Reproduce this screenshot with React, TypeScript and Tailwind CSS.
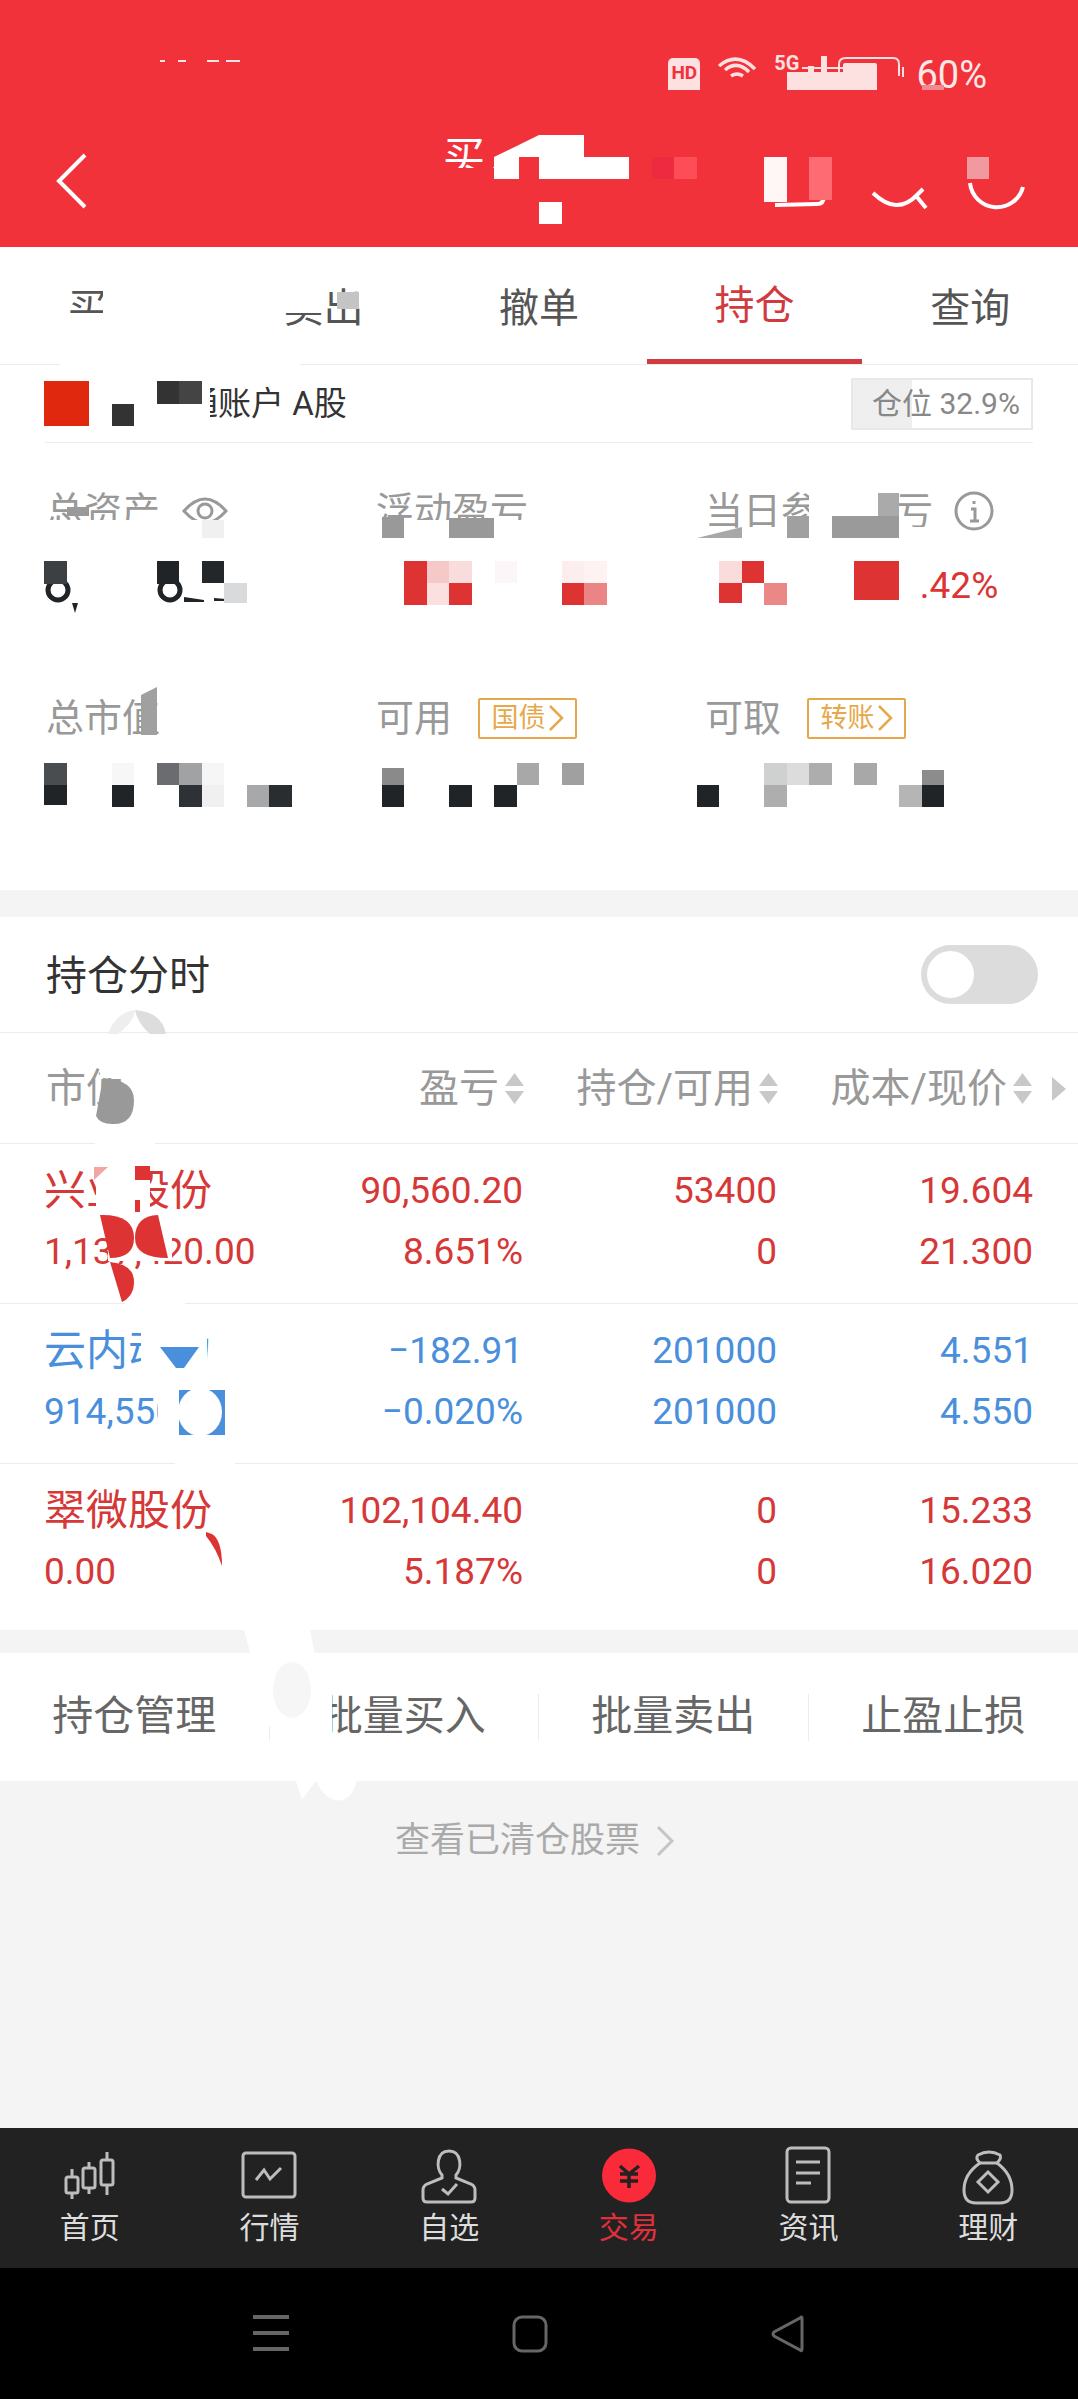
import type { ReactNode } from "react"

const font = "font-['Roboto','Noto_Sans_CJK_SC',sans-serif]"

const RED = "#dd3333"
const DARK = "#212427"

// the screenshot was scribbled over: mosaic squares and white blots, [x, y, w, h, colour]
const patches: [number, number, number, number, string][] = [
  // time, title
  [158, 40, 90, 20, "#f1323b"],
  [160, 60, 5, 2, "#ffe5e5"],
  [178, 60, 8, 2, "#ffe5e5"],
  [207, 60, 12, 2, "#ffe5e5"],
  [226, 60, 14, 2, "#ffe5e5"],
  [440, 168, 54, 24, "#f1323b"],
  [485, 136, 34, 21, "#f1323b"],
  [494, 157, 25, 22, "#ffffff"],
  [519, 157, 20, 22, "#f1323b"],
  [539, 135, 45, 22, "#ffffff"],
  [539, 157, 90, 22, "#ffffff"],
  [539, 202, 23, 22, "#ffffff"],
  [652, 157, 22, 22, "#ee2a40"],
  [674, 157, 23, 22, "#ff4d57"],
  [764, 157, 23, 45, "#fff6f6"],
  [809, 157, 23, 43, "#ff6b72"],
  [967, 157, 22, 22, "#f09a9f"],
  // status bar
  [787, 72, 90, 18, "#fde0e0"],
  [922, 85, 22, 5, "#f08a90"],
  // tabs
  [60, 313, 100, 52, "#ffffff"],
  [103, 270, 60, 46, "#ffffff"],
  [280, 276, 46, 37, "#ffffff"],
  [337, 292, 22, 17, "#c4c4c4"],
  [160, 361, 140, 4, "#ffffff"],
  // account row
  [134, 381, 76, 44, "#ffffff"],
  [44, 381, 45, 45, "#e0280f"],
  [112, 404, 22, 22, "#333333"],
  [157, 381, 22, 23, "#333333"],
  [179, 381, 23, 23, "#444444"],
  // total assets
  [44, 520, 140, 22, "#ffffff"],
  [184, 520, 46, 22, "#ffffff"],
  [67, 507, 22, 9, "#999999"],
  [202, 520, 22, 18, "#f0f0f0"],
  [44, 561, 23, 23, "#3d4043"],
  [157, 561, 22, 23, DARK],
  [202, 561, 22, 22, "#24272a"],
  [224, 583, 23, 20, "#d8dadb"],
  // floating profit
  [370, 520, 160, 22, "#ffffff"],
  [382, 517, 22, 21, "#999999"],
  [449, 518, 45, 20, "#999999"],
  [404, 561, 23, 44, RED],
  [427, 561, 22, 22, "#f6c9c9"],
  [427, 583, 22, 22, "#fbe0e0"],
  [449, 561, 23, 22, "#f9dddd"],
  [449, 583, 23, 22, RED],
  [495, 561, 22, 22, "#fdf6f8"],
  [562, 561, 22, 22, "#fdeeee"],
  [562, 583, 22, 22, RED],
  [584, 561, 23, 22, "#fef2f2"],
  [584, 583, 23, 22, "#eb8585"],
  // day profit
  [742, 527, 190, 14, "#ffffff"],
  [809, 490, 70, 37, "#ffffff"],
  [787, 516, 22, 22, "#a0a0a0"],
  [832, 516, 67, 22, "#9a9a9a"],
  [878, 493, 21, 23, "#aaaaaa"],
  [719, 561, 23, 22, "#fbdcdc"],
  [719, 583, 23, 20, RED],
  [742, 561, 22, 22, RED],
  [764, 583, 23, 22, "#ea8888"],
  [854, 561, 45, 39, RED],
  [899, 565, 21, 40, "#ffffff"],
  // row 2 values
  [44, 763, 23, 22, "#4a4d50"],
  [44, 785, 23, 20, DARK],
  [112, 763, 22, 22, "#f7f7f7"],
  [112, 785, 22, 22, DARK],
  [157, 763, 22, 22, "#6a6c6f"],
  [179, 763, 23, 22, "#a0a2a4"],
  [179, 785, 23, 22, "#2e3135"],
  [202, 763, 22, 22, "#f6f6f6"],
  [202, 785, 22, 22, "#f0f0f0"],
  [247, 785, 22, 22, "#a7a8a9"],
  [269, 785, 23, 22, "#2a2d30"],
  [382, 768, 22, 17, "#8a8a8a"],
  [382, 785, 22, 22, DARK],
  [449, 785, 23, 22, DARK],
  [494, 785, 23, 22, DARK],
  [517, 763, 22, 22, "#a8a8a8"],
  [562, 763, 22, 22, "#a0a0a0"],
  [697, 785, 22, 22, DARK],
  [764, 763, 23, 22, "#cfd0d0"],
  [764, 785, 23, 22, "#aeaeae"],
  [787, 763, 22, 22, "#dcdcdc"],
  [809, 763, 23, 22, "#adadad"],
  [854, 763, 23, 22, "#a8a8a8"],
  [899, 785, 23, 22, "#b5b5b5"],
  [922, 770, 22, 15, "#8c8c8c"],
  [922, 785, 22, 22, DARK],
  // table, white blots over the names
  [95, 1141, 60, 6, "#ffffff"],
  [100, 1064, 40, 14, "#ffffff"],
  [96, 1160, 54, 52, "#ffffff"],
  [135, 1166, 15, 14, RED],
  [135, 1200, 5, 12, RED],
  [108, 1215, 64, 46, "#ffffff"],
  [125, 1301, 60, 6, "#ffffff"],
  [141, 1326, 66, 54, "#ffffff"],
  [158, 1385, 70, 52, "#ffffff"],
  [179, 1390, 46, 45, "#4a8fdc"],
  [175, 1461, 60, 6, "#ffffff"],
  [192, 1535, 22, 32, "#ffffff"],
  [316, 1690, 16, 55, "#ffffff"],
]

function Overlay() {
  return (
    <svg
      className="absolute inset-0 z-10 pointer-events-none"
      width={1078}
      height={2399}
      viewBox="0 0 1078 2399"
    >
      {/* bits of digits left under the squares */}
      <circle cx="58" cy="590" r="10" fill="none" stroke={DARK} strokeWidth="5" />
      <path d="M72 603 l6 0 l-3 10 z" fill={DARK} />
      <circle cx="170" cy="590" r="10" fill="none" stroke={DARK} strokeWidth="5" />
      <path d="M184 597 l20 3 l0 2 l-20 0 z M214 598 l12 1 l0 2 l-12 0 z" fill={DARK} />
      {patches.map(([x, y, w, h, c], i) => (
        <rect key={i} x={x} y={y} width={w} height={h} fill={c} />
      ))}
      <path d="M494 157 L539 135 V157 Z" fill="#ffffff" />
      <path d="M697 538 L742 527 V538 Z" fill="#a8a8a8" />
      <ellipse cx="200" cy="1412" rx="22" ry="24" fill="#ffffff" />
      <path d="M160 1347 H199 L184 1368 H176 Z" fill="#4a8fdc" />
      <path d="M108 1034 Q116 1012 135 1010 Q134 1022 118 1034 Z" fill="#eeeeee" />
      <path d="M135 1010 Q162 1012 166 1034 H150 Q138 1024 135 1010 Z" fill="#dddddd" />
      <path d="M103 1078 Q134 1080 134 1100 Q134 1125 112 1124 Q100 1124 96 1116 Z" fill="#999999" />
      <path d="M94 1167 H108 L94 1180 Z" fill="#f3a5a5" />
      <path d="M100 1215 Q134 1214 134 1238 Q134 1258 110 1258 Z" fill={RED} />
      <path d="M158 1215 Q135 1216 135 1238 Q135 1258 168 1258 Z" fill={RED} />
      <path d="M110 1262 Q134 1264 134 1282 Q134 1296 122 1302 Z" fill={RED} />
      <path d="M206 1532 L212 1534 Q222 1540 222 1566 Q216 1548 206 1536 Z" fill={RED} />
      <path d="M244 1630 H310 L318 1670 L330 1700 L316 1745 H280 Q262 1720 258 1680 Z" fill="#ffffff" />
      <ellipse cx="292" cy="1690" rx="19" ry="28" fill="#f6f6f6" />
      <path d="M296 1781 H357 Q350 1804 334 1800 Q322 1796 316 1781 L302 1800 Z" fill="#ffffff" />
      <path d="M141 695 L157 687 V735 H141 Z" fill="#a0a0a0" />
    </svg>
  )
}

function Tag({ children }: { children: ReactNode }) {
  return (
    <span className="ml-[26px] flex h-[41px] w-[99px] items-center justify-center gap-[2px] border-2 border-[#e6a84a] text-[27px] leading-none text-[#e6a84a] rounded-[2px]">
      {children}
      <svg width="16" height="28" viewBox="0 0 16 28" fill="none" stroke="#e6a84a" strokeWidth="2.5">
        <path d="M2 2 L14 14 L2 26" />
      </svg>
    </span>
  )
}

function SortArrows() {
  return (
    <svg className="ml-[5px]" width="21" height="32" viewBox="0 0 21 32" fill="#c8c8c8">
      <path d="M10.5 0 L20 13 H1 Z M1 18 H20 L10.5 31 Z" />
    </svg>
  )
}

const stocks = [
  { name: "兴业股份", value: "1,137,420.00", pnl: "90,560.20", pct: "8.651%", hold: "53400", avail: "0", cost: "19.604", now: "21.300", color: "text-[#d63838]" },
  { name: "云内动力", value: "914,550.00", pnl: "−182.91", pct: "−0.020%", hold: "201000", avail: "201000", cost: "4.551", now: "4.550", color: "text-[#4a8fdc]" },
  { name: "翠微股份", value: "0.00", pnl: "102,104.40", pct: "5.187%", hold: "0", avail: "0", cost: "15.233", now: "16.020", color: "text-[#d63838]" },
]

function NavIcon({ name }: { name: string }) {
  const stroke = "#bdbdbd"
  if (name === "首页")
    return (
      <svg width="60" height="60" viewBox="0 0 60 60" fill="none" stroke={stroke} strokeWidth="3">
        <path d="M12 23 V31 M12 47 V53 M29 16 V22 M29 42 V48 M47 6 V14 M47 39 V49" />
        <rect x="6" y="31" width="12" height="16" rx="2" />
        <rect x="23" y="22" width="12" height="20" rx="2" />
        <rect x="41" y="14" width="12" height="25" rx="2" />
      </svg>
    )
  if (name === "行情")
    return (
      <svg width="60" height="60" viewBox="0 0 60 60" fill="none" stroke={stroke} strokeWidth="3">
        <rect x="4" y="7" width="52" height="44" rx="3" />
        <path d="M17 34 L25 24 L31 33 L42 22" />
      </svg>
    )
  if (name === "自选")
    return (
      <svg width="60" height="60" viewBox="0 0 60 60" fill="none" stroke={stroke} strokeWidth="3">
        <path d="M23 29 C17 23 17 5 30 5 C43 5 43 23 37 29 V32 L52 38 Q56 40 56 44 V52 Q56 56 52 56 H8 Q4 56 4 52 V44 Q4 40 8 38 L23 32 Z" />
        <path d="M23 43 L29 48 L38 38" />
      </svg>
    )
  if (name === "交易")
    return (
      <svg width="60" height="60" viewBox="0 0 60 60" fill="none">
        <circle cx="30" cy="29.5" r="27" fill="#fa2a3a" />
        <path d="M21 20 L30 28 L40 20 M21 28 H39 M21 35 H39 M30 28 V42" stroke="#222222" strokeWidth="3.5" />
      </svg>
    )
  if (name === "资讯")
    return (
      <svg width="60" height="60" viewBox="0 0 60 60" fill="none" stroke={stroke} strokeWidth="3">
        <rect x="9" y="2" width="42" height="54" rx="4" />
        <path d="M18 16 H42 M18 27 H42 M18 37 H33" />
      </svg>
    )
  return (
    <svg width="60" height="60" viewBox="0 0 60 60" fill="none" stroke={stroke} strokeWidth="3">
      <path d="M20 9 Q31 3 42 9 Q44 12 39 17 Q54 28 54 44 Q54 57 42 57 H18 Q6 57 6 44 Q6 28 22 17 Q17 12 20 9 Z" />
      <path d="M22 17 H39" />
      <path d="M30 26 L40 36 L30 46 L20 36 Z" />
    </svg>
  )
}

const navItems = ["首页", "行情", "自选", "交易", "资讯", "理财"]

export default function App() {
  return (
    <div className={`relative flex h-[2399px] w-[1078px] flex-col overflow-hidden bg-[#f4f4f4] ${font}`}>
      {/* red header */}
      <header className="h-[247px] shrink-0 bg-[#f1323b] text-white">
        <div className="flex h-[130px] items-start justify-end pr-[91px] pt-[55px]">
          <div className="relative mt-[3px] h-[32px] w-[32px] rounded-t-[5px] bg-[#fde0e0] text-center text-[19px] font-bold leading-[30px] text-[#f1323b]">
            HD
          </div>
          <svg className="ml-[17px]" width="40" height="24" viewBox="0 0 40 24" fill="none" stroke="#fde0e0" strokeWidth="3.5">
            <path d="M2 11 Q20 -4 38 14 M8 15 Q20 5 32 17 M14 21 Q20 17 26 21" />
          </svg>
          <span className="ml-[17px] text-[20px] font-bold leading-[16px] text-[#fde0e0]">5G</span>
          <svg className="ml-[-2px]" width="107" height="30" viewBox="0 0 107 30" fill="none" stroke="#fde0e0" strokeWidth="2">
            <path d="M5 13 H60" />
            <path d="M11 11 h6 v6 h-6z M24 1 h6 v16 h-6z" fill="#fde0e0" stroke="none" />
            <path d="M42 17 V9 Q42 3 49 3 H96 Q102 3 102 9 V21" />
            <rect x="46" y="8" width="34" height="12" rx="2" fill="#fde0e0" stroke="none" />
            <path d="M106 12 V22" />
          </svg>
          <span className="ml-[12px] mt-[2px] text-[38px] leading-[36px] text-[#fde8e8]">60%</span>
        </div>
        <div className="flex h-[117px] items-start">
          <svg className="ml-[56px] mt-[23px]" width="32" height="56" viewBox="0 0 32 56" fill="none" stroke="#ffffff" strokeWidth="4">
            <path d="M29 2 L3 28 L29 54" />
          </svg>
          <span className="ml-[355px] text-[42px] leading-[44px] mt-[6px]">买入</span>
          <svg className="ml-[243px] mt-[20px]" width="60" height="65" viewBox="0 0 60 65" fill="none" stroke="#ffffff" strokeWidth="4">
            <path d="M5 55 L47 54 Q54 54 54 46" />
          </svg>
          <svg className="ml-[35px] mt-[20px]" width="65" height="65" viewBox="0 0 65 65" fill="none" stroke="#ffffff" strokeWidth="4">
            <path d="M8 43 Q32 66 52 45 L58 39 M52 47 L61 58" />
          </svg>
          <svg className="ml-[35px] mt-[20px]" width="65" height="65" viewBox="0 0 65 65" fill="none" stroke="#ffffff" strokeWidth="4">
            <path d="M5 33 A27 27 0 0 0 58 37" />
          </svg>
        </div>
      </header>

      {/* tabs */}
      <nav className="grid h-[118px] shrink-0 grid-cols-5 border-b border-[#ececec] bg-white text-[40px] text-[#555555]">
        {["买入", "卖出", "撤单", "持仓", "查询"].map((tab) => (
          <div key={tab} className={`flex items-center justify-center pt-[6px] ${tab === "持仓" ? "border-b-[5px] border-[#d13a3f] text-[#d13a3f]" : ""}`}>
            {tab}
          </div>
        ))}
      </nav>

      {/* account + position */}
      <section className="shrink-0 bg-white">
        <div className="mx-[45px] flex h-[78px] items-center justify-between border-b border-[#ececec] pl-[107px]">
          <span className="text-[33px] text-[#333333]">普通账户 A股</span>
          <div className="flex h-[52px] w-[182px] items-center border-2 border-[#e8e8e8] bg-[linear-gradient(90deg,#efefef_33%,#ffffff_33%)] pl-[19px] text-[30px] text-[#888888]">
            仓位 32.9%
          </div>
        </div>
      </section>

      {/* summary */}
      <section className="h-[447px] shrink-0 bg-white pl-[46px] pt-[46px] text-[38px] leading-[44px] text-[#999999]">
        <div className="grid h-[207px] grid-cols-[330px_329px_1fr] items-start">
          <div className="flex items-center">
            总资产
            <svg className="ml-[22px]" width="46" height="32" viewBox="0 0 46 32" fill="none" stroke="#999999" strokeWidth="3">
              <path d="M2 16 Q23 -8 44 16 Q23 40 2 16 Z" />
              <circle cx="23" cy="16" r="7" />
            </svg>
          </div>
          <div>浮动盈亏</div>
          <div>
            <div className="flex items-center">
              当日参考盈亏
              <svg className="ml-[21px]" width="40" height="40" viewBox="0 0 40 40" fill="none" stroke="#999999" strokeWidth="3">
                <circle cx="20" cy="20" r="18" />
                <path d="M20 10 V13 M17 18 H21 V30 M16 30 H25" />
              </svg>
            </div>
            <div className="mt-[31px] pl-[194px] text-[37px] text-[#dd3333]">1.42%</div>
          </div>
        </div>
        <div className="grid grid-cols-[330px_329px_1fr] items-center">
          <div>总市值</div>
          <div className="flex items-center">可用<Tag>国债</Tag></div>
          <div className="flex items-center">可取<Tag>转账</Tag></div>
        </div>
      </section>

      <div className="h-[27px] shrink-0" />

      {/* intraday toggle */}
      <div className="flex h-[116px] shrink-0 items-center justify-between border-b border-[#ececec] bg-white pl-[46px] pr-[40px] text-[41px] text-[#333333]">
        <span className="pt-[4px]">持仓分时</span>
        <div className="h-[59px] w-[117px] rounded-full bg-[#dcdcdc] p-[6px]">
          <div className="h-[47px] w-[47px] rounded-full bg-white" />
        </div>
      </div>

      {/* holdings */}
      <section className="shrink-0 bg-white">
        <div className="grid h-[111px] grid-cols-[230px_249px_254px_254px_1fr] items-center border-b border-[#ececec] pl-[46px] pt-[2px] text-[40px] text-[#999999]">
          <div>市值</div>
          <div className="flex items-center justify-end">盈亏<SortArrows /></div>
          <div className="flex items-center justify-end">持仓/可用<SortArrows /></div>
          <div className="flex items-center justify-end">成本/现价<SortArrows /></div>
          <svg className="ml-[19px]" width="14" height="28" viewBox="0 0 14 28" fill="#c8c8c8">
            <path d="M0 2 L14 14 L0 26 Z" />
          </svg>
        </div>
        {stocks.map((s, i) => (
          <div
            key={s.name}
            className={`grid content-start grid-cols-[230px_249px_254px_256px] pl-[44px] pt-[16px] text-[37px] leading-[61px] ${s.color} ${i < 2 ? "h-[160px] border-b border-[#ececec]" : "h-[166px]"}`}
          >
            <div className="text-[42px]">{s.name}</div>
            <div className="text-right">{s.pnl}</div>
            <div className="text-right">{s.hold}</div>
            <div className="text-right">{s.cost}</div>
            <div>{s.value}</div>
            <div className="text-right">{s.pct}</div>
            <div className="text-right">{s.avail}</div>
            <div className="text-right">{s.now}</div>
          </div>
        ))}
      </section>

      <div className="h-[23px] shrink-0" />

      {/* actions */}
      <div className="grid h-[128px] shrink-0 grid-cols-4 items-center bg-white text-[41px] text-[#666666]">
        {["持仓管理", "批量买入", "批量卖出", "止盈止损"].map((a, i) => (
          <div key={a} className={`flex h-[47px] items-center justify-center ${i < 3 ? "border-r border-[#ececec]" : ""}`}>
            {a}
          </div>
        ))}
      </div>

      <div className="flex h-[120px] shrink-0 items-center gap-[16px] pl-[395px] text-[35px] text-[#aaaaaa]">
        查看已清仓股票
        <svg width="18" height="32" viewBox="0 0 18 32" fill="none" stroke="#c4c4c4" strokeWidth="3">
          <path d="M2 2 L16 16 L2 30" />
        </svg>
      </div>

      {/* bottom nav */}
      <footer className="mt-auto grid h-[140px] shrink-0 grid-cols-6 bg-[#222222] pt-[18px]">
        {navItems.map((item) => (
          <div key={item} className="flex flex-col items-center">
            <NavIcon name={item} />
            <span className={`mt-[4px] text-[30px] leading-[36px] ${item === "交易" ? "text-[#e0303c]" : "text-[#dddddd]"}`}>
              {item}
            </span>
          </div>
        ))}
      </footer>

      {/* android keys */}
      <div className="flex h-[131px] shrink-0 items-start bg-black pt-[47px]">
        <svg className="ml-[253px]" width="36" height="38" viewBox="0 0 36 38" fill="#666666">
          <rect y="0" width="36" height="4" />
          <rect y="16" width="36" height="4" />
          <rect y="32" width="36" height="4" />
        </svg>
        <svg className="ml-[223px]" width="36" height="38" viewBox="0 0 36 38" fill="none" stroke="#666666" strokeWidth="3">
          <rect x="2" y="2" width="32" height="34" rx="8" />
        </svg>
        <svg className="ml-[223px]" width="34" height="38" viewBox="0 0 34 38" fill="none" stroke="#666666" strokeWidth="3">
          <path d="M31 3 Q31 1 29 3 L3 17 Q1 19 3 21 L29 35 Q31 37 31 34 Z" />
        </svg>
      </div>

      <Overlay />
    </div>
  )
}
